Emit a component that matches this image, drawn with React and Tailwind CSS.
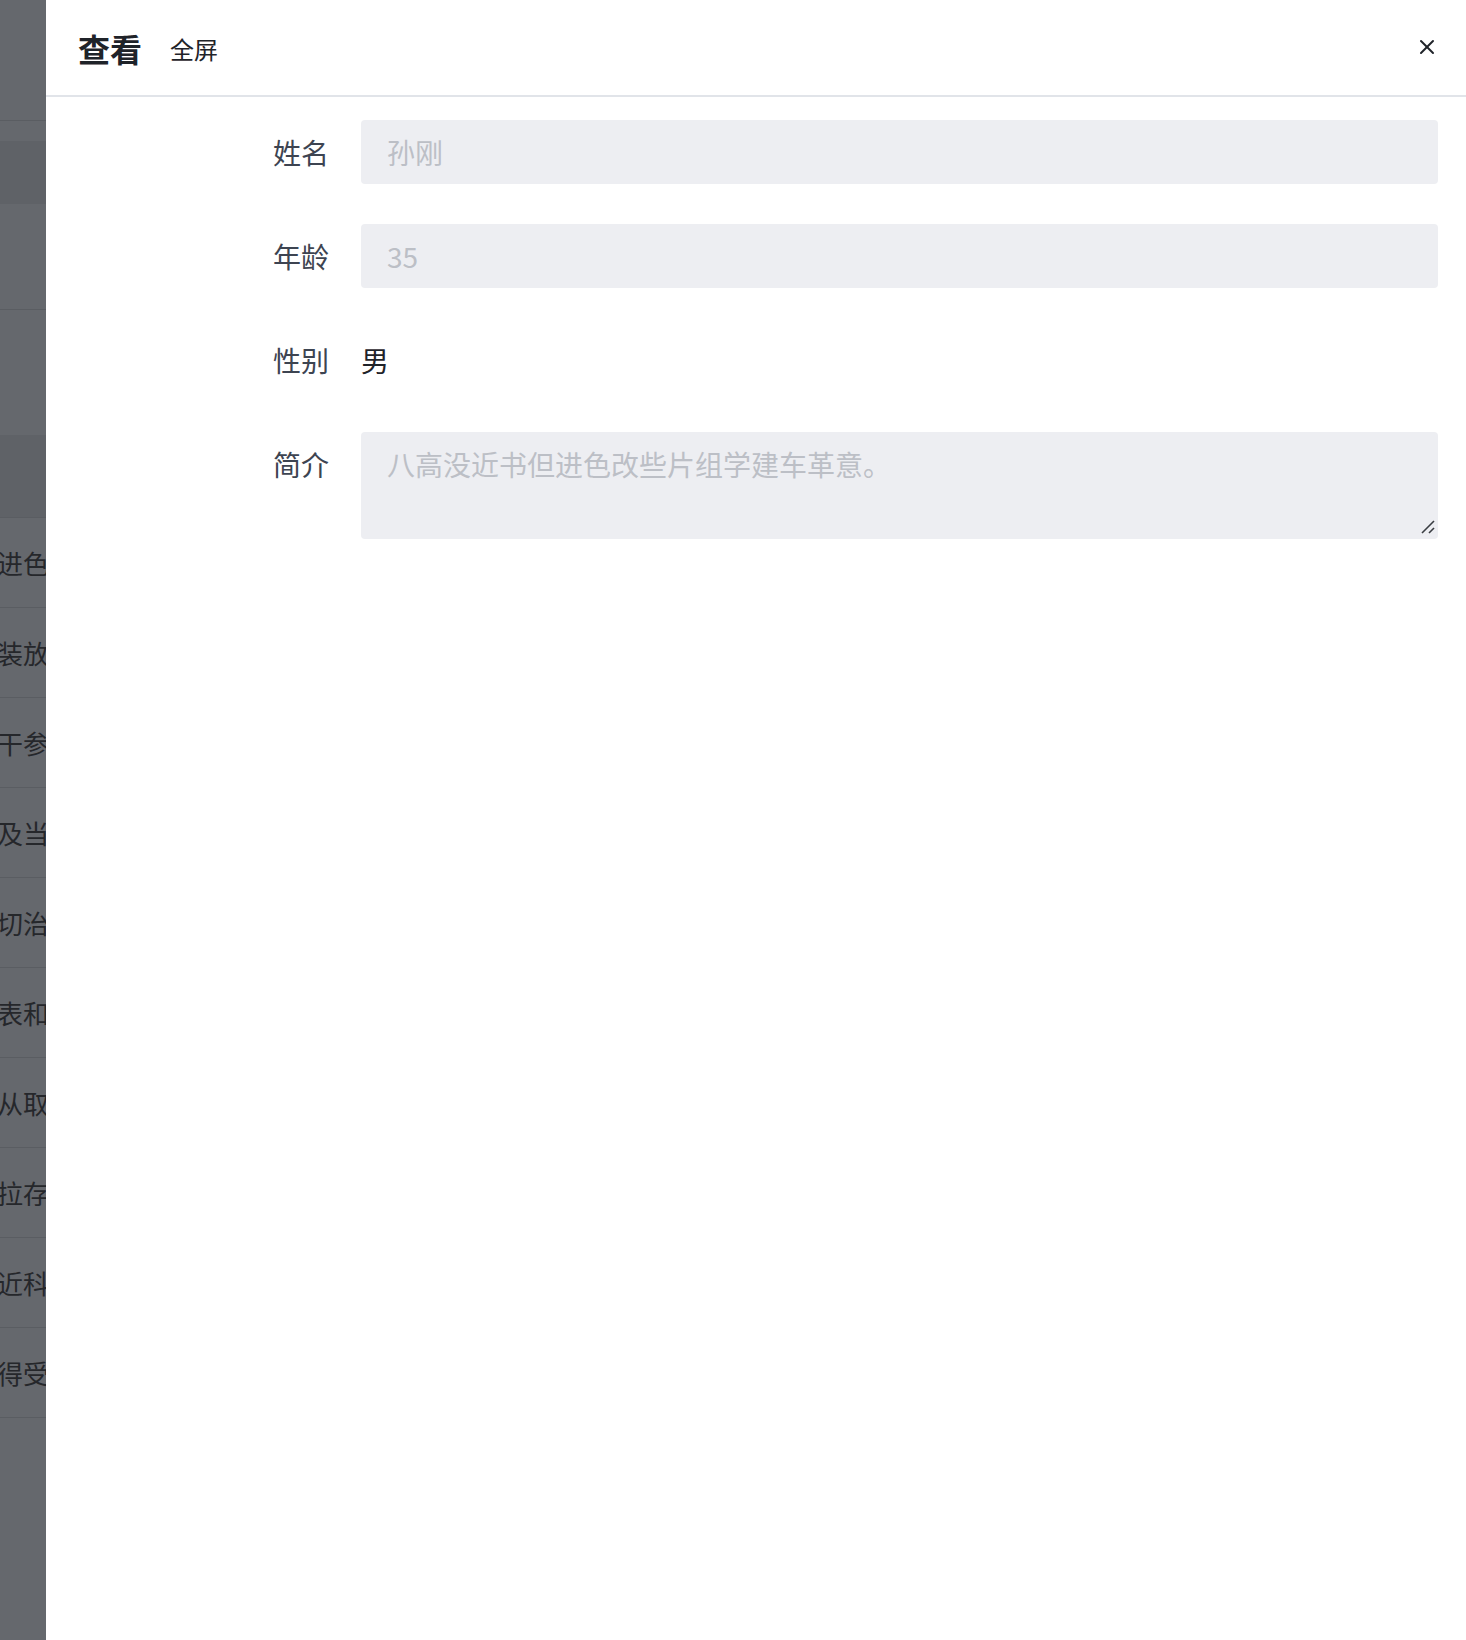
import { X } from 'lucide-react';

const FONT = { fontFamily: '"Noto Sans CJK SC", "Noto Sans", sans-serif' };

const BG_ROWS = ['进色', '装放', '干参', '及当', '切治', '表和', '从取', '拉存', '近科', '得受'];

function Field({ label, children, top }) {
  return (
    <div className={`flex gap-8 ${top ? 'items-start' : 'items-center'}`}>
      <div className="w-[255px] h-16 flex items-center justify-end shrink-0 text-[28px] text-[#3d4451]">
        {label}
      </div>
      <div className="flex-1 min-w-0">{children}</div>
    </div>
  );
}

export default function App() {
  return (
    <div className="flex w-[1466px] h-[1640px] overflow-hidden bg-white" style={FONT}>
      {/* page behind the mask */}
      <div className="w-[46px] shrink-0 bg-[#65686d] overflow-hidden flex flex-col">
        <div className="h-[121px] shrink-0 border-b border-[#5a5d62]" />
        <div className="h-[20px] shrink-0" />
        <div className="h-[63px] shrink-0 bg-[#5f6267]" />
        <div className="h-[106px] shrink-0 border-b border-[#5a5d62]" />
        <div className="h-[125px] shrink-0" />
        <div className="h-[83px] shrink-0 bg-[#5f6267] border-b border-[#5a5d62]" />
        {BG_ROWS.map(t => (
          <div
            key={t}
            className="h-[90px] shrink-0 border-b border-[#5a5d62] flex items-center justify-end text-[26px] text-[#25272b] whitespace-nowrap -mr-[3px]"
          >
            {t}
          </div>
        ))}
        <div className="flex-1" />
      </div>

      {/* drawer */}
      <div className="flex-1 flex flex-col bg-white">
        <div className="h-[97px] shrink-0 border-b-2 border-[#e1e4e9] flex items-center pl-[32px] pr-[27px]">
          <span className="text-[32px] font-bold text-[#1f2329] leading-none">查看</span>
          <span className="ml-[28px] mt-[3px] text-[24px] text-[#1f2329] leading-none">全屏</span>
          <button className="ml-auto mb-[2px] text-[#1f2329]">
            <X size={24} strokeWidth={2} />
          </button>
        </div>

        <div className="pt-[23px] pl-[28px] pr-[28px] flex flex-col gap-10">
          <Field label="姓名">
            <div className="h-16 rounded bg-[#edeef2] flex items-center px-[26px] text-[28px] text-[#bcbfc6]">孙刚</div>
          </Field>
          <Field label="年龄">
            <div className="h-16 rounded bg-[#edeef2] flex items-center px-[26px] text-[28px] text-[#bcbfc6]">35</div>
          </Field>
          <Field label="性别">
            <div className="h-16 flex items-center text-[28px] text-[#1f2329]">男</div>
          </Field>
          <Field label="简介" top>
            <div className="relative">
              <textarea
                readOnly
                value="八高没近书但进色改些片组学建车革意。"
                className="block w-full h-[107px] resize-none rounded bg-[#edeef2] px-[26px] pt-4 text-[28px] leading-8 text-[#bcbfc6] outline-none"
                style={FONT}
              />
              <svg className="absolute right-[3px] bottom-[3px]" width="16" height="16" viewBox="0 0 16 16">
                <path d="M15 1 L3 13" stroke="#3a3d42" strokeWidth="1.6" />
                <path d="M15 8 L10 13" stroke="#3a3d42" strokeWidth="1.6" />
              </svg>
            </div>
          </Field>
        </div>
      </div>
    </div>
  );
}
